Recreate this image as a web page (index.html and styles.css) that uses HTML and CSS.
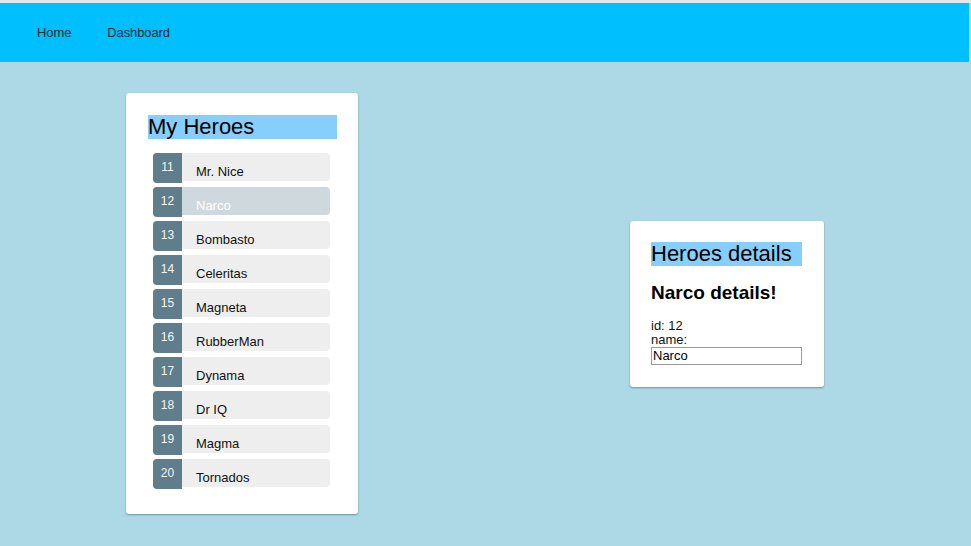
FILE: index.html
```html
<!DOCTYPE html>
<html>
<head>
<meta charset="utf-8">
<link rel="stylesheet" href="styles.css">
</head>
<body>
<div class="topstrip"></div>
<nav class="nav">
  <a class="nav-link">Home</a>
  <a class="nav-link">Dashboard</a>
</nav>
<main class="main">
  <section class="card heroes-card">
    <h2 class="title">My Heroes</h2>
    <ul class="heroes">
      <li class="hero"><span class="badge">11</span><span class="name">Mr. Nice</span></li>
      <li class="hero selected"><span class="badge">12</span><span class="name">Narco</span></li>
      <li class="hero"><span class="badge">13</span><span class="name">Bombasto</span></li>
      <li class="hero"><span class="badge">14</span><span class="name">Celeritas</span></li>
      <li class="hero"><span class="badge">15</span><span class="name">Magneta</span></li>
      <li class="hero"><span class="badge">16</span><span class="name">RubberMan</span></li>
      <li class="hero"><span class="badge">17</span><span class="name">Dynama</span></li>
      <li class="hero"><span class="badge">18</span><span class="name">Dr IQ</span></li>
      <li class="hero"><span class="badge">19</span><span class="name">Magma</span></li>
      <li class="hero"><span class="badge">20</span><span class="name">Tornados</span></li>
    </ul>
  </section>
  <section class="card details-card">
    <h2 class="title">Heroes details</h2>
    <h3 class="subtitle">Narco details!</h3>
    <div class="field">id: 12</div>
    <div class="field">name:</div>
    <input class="name-input" value="Narco">
  </section>
</main>
</body>
</html>
```
FILE: styles.css
```css
html, body {
  margin: 0;
  padding: 0;
}
body {
  background: #add8e6;
  font-family: "Liberation Sans", Arial, sans-serif;
  color: #111;
  height: 546px;
  overflow: hidden;
}
.topstrip {
  height: 3px;
  background: #e6e6e6;
}
.nav {
  height: 59px;
  background: #00bfff;
  margin-right: 2px;
  display: flex;
  align-items: center;
  padding-left: 37px;
  gap: 36px;
}
.nav-link {
  font-size: 13px;
  letter-spacing: -0.1px;
  color: #1c2a33;
  text-decoration: none;
}
.main {
  display: flex;
  align-items: center;
  padding: 31px 0 32px 126px;
  gap: 272px;
}
.card {
  background: #fff;
  border-radius: 3px;
  box-shadow: 0 1px 2px rgba(60, 90, 110, 0.55);
}
.heroes-card {
  width: 189px;
  padding: 22px 21px 27px 22px;
}
.details-card {
  width: 151px;
  padding: 21px 22px 22px 21px;
}
.title {
  margin: 0;
  background: #87cefa;
  font-size: 22px;
  line-height: 24px;
  font-weight: normal;
  color: #000;
}
.heroes {
  list-style: none;
  margin: 14px 0 0 0;
  padding: 0 7px 0 5px;
  display: flex;
  flex-direction: column;
  gap: 6px;
}
.hero {
  height: 28px;
  background: #eee;
  border-radius: 4px;
  display: flex;
  align-items: flex-start;
  font-size: 13px;
  color: #111;
}
.hero.selected {
  background: #cfd8dc;
  color: #fff;
}
.badge {
  width: 29px;
  height: 30px;
  box-sizing: border-box;
  background: #607d8b;
  color: #f4f7f8;
  border-radius: 4px 0 0 4px;
  font-size: 12px;
  line-height: 29px;
  text-align: center;
  margin-right: 14px;
}
.name {
  line-height: 15px;
  padding-top: 11px;
}
.subtitle {
  margin: 17px 0 0 0;
  font-size: 19px;
  line-height: 20px;
  font-weight: bold;
  color: #000;
}
.field {
  font-size: 13px;
  line-height: 14px;
  color: #111;
}
.subtitle + .field {
  margin-top: 16px;
}
.name-input {
  display: block;
  box-sizing: border-box;
  width: 151px;
  height: 18px;
  margin: 0;
  padding: 0 1px;
  border: 1px solid #9a9a9a;
  font-family: "Liberation Sans", Arial, sans-serif;
  font-size: 13px;
  color: #000;
  outline: none;
}
```
